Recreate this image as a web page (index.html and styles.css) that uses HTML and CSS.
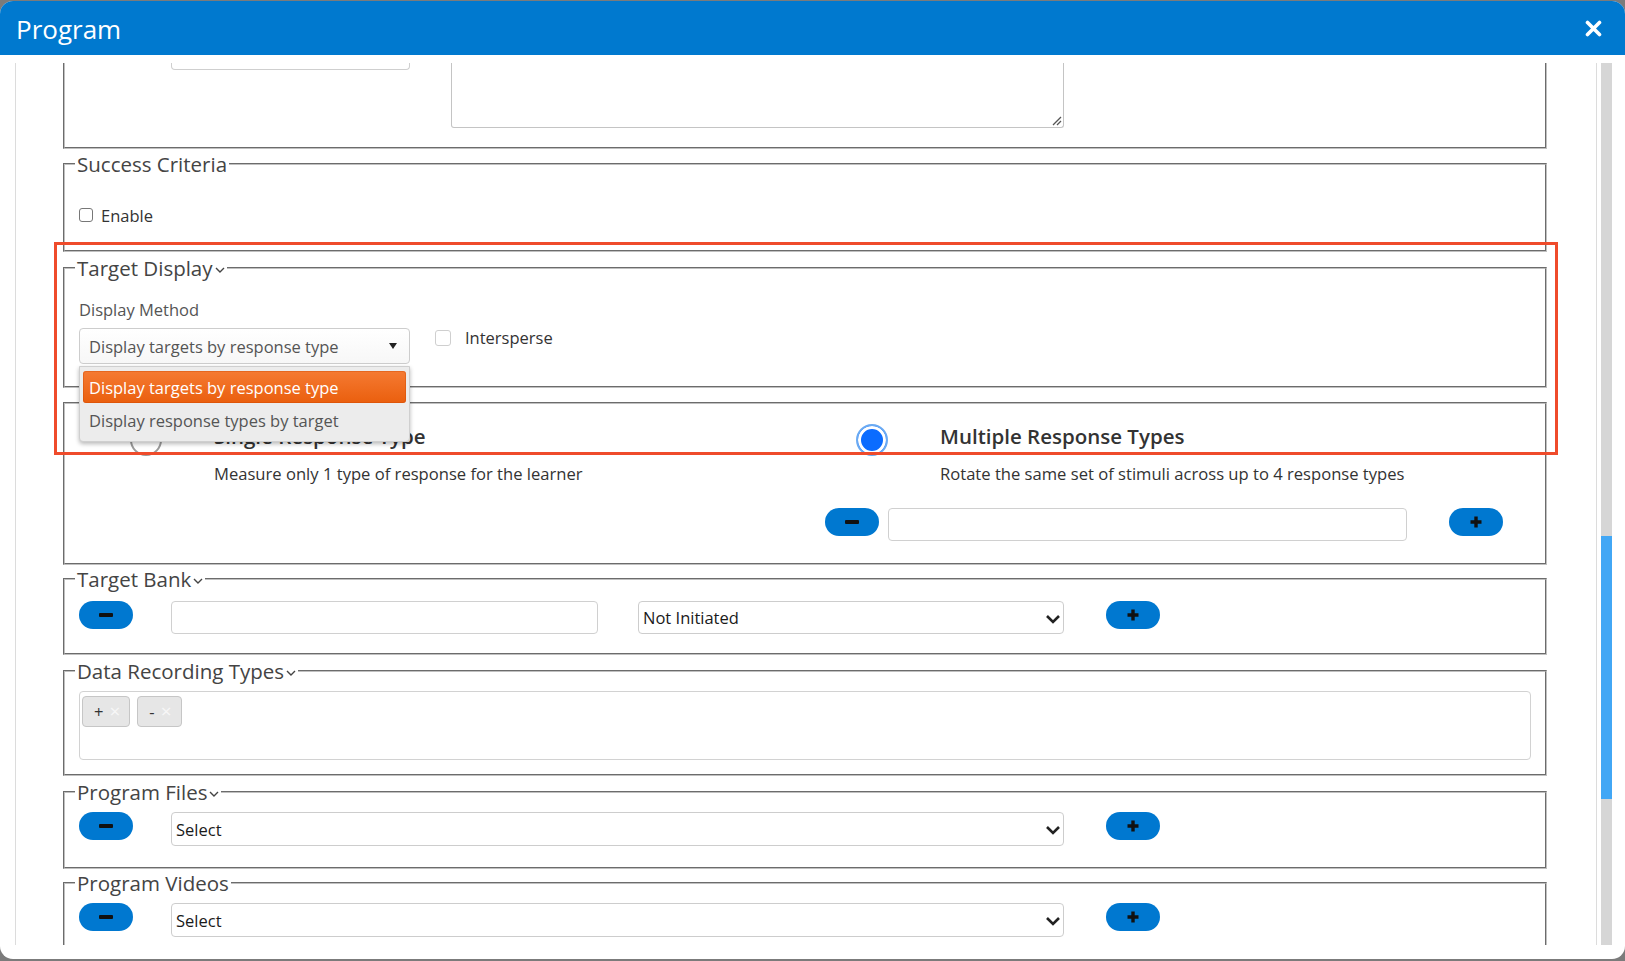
FILE: index.html
```html
<!DOCTYPE html>
<html lang="en">
<head>
<meta charset="utf-8">
<title>Program</title>
<link rel="stylesheet" href="styles.css">
</head>
<body>
<div class="modal">
  <header class="modal-header">
    <h1 class="modal-title">Program</h1>
    <span class="close-btn" aria-label="Close">
      <svg width="17" height="17" viewBox="0 0 17 17"><path d="M2.5 2.5 L14.5 14.5 M14.5 2.5 L2.5 14.5" stroke="#fff" stroke-width="3.6" stroke-linecap="round"/></svg>
    </span>
  </header>
  <div class="modal-body">
    <div class="frame">
      <div class="content">

        <div class="fs fs-clipped">
          <div class="stub-input"></div>
          <div class="stub-textarea">
            <svg class="grip" width="12" height="12" viewBox="0 0 12 12"><path d="M11 3 L3 11 M11 7 L7 11" stroke="#555" stroke-width="1.3"/></svg>
          </div>
        </div>

        <fieldset class="fs fs-success">
          <legend>Success Criteria</legend>
          <label class="check"><span class="cb"></span>Enable</label>
        </fieldset>

        <fieldset class="fs fs-display">
          <legend>Target Display<svg class="chev" width="10" height="6" viewBox="0 0 10 6"><path d="M1 1 L5 5 L9 1" fill="none" stroke="#444" stroke-width="1.4"/></svg></legend>
          <div class="field-label">Display Method</div>
          <div class="display-row">
            <div class="picker">
              <div class="picker-box">Display targets by response type<span class="caret"></span></div>
              <ul class="picker-menu">
                <li class="picker-opt active">Display targets by response type</li>
                <li class="picker-opt">Display response types by target</li>
              </ul>
            </div>
            <label class="check check-light"><span class="cb cb-light"></span>Intersperse</label>
          </div>
        </fieldset>

        <fieldset class="fs fs-response">
          <div class="resp-grid">
            <div class="resp-col">
              <span class="radio-wrap"><span class="radio"></span></span>
              <div class="resp-text">
                <div class="resp-title">Single Response Type</div>
                <div class="resp-desc">Measure only 1 type of response for the learner</div>
              </div>
            </div>
            <div class="resp-col">
              <span class="radio-wrap"><span class="radio radio-on"></span></span>
              <div class="resp-text">
                <div class="resp-title">Multiple Response Types</div>
                <div class="resp-desc">Rotate the same set of stimuli across up to 4 response types</div>
              </div>
              <div class="resp-controls">
                <span class="pill"><svg width="16" height="6" viewBox="0 0 16 6"><rect x="1" y="1" width="14" height="4" rx="1" fill="#111"/></svg></span>
                <div class="input resp-input"></div>
                <span class="pill pill-plus"><svg width="14" height="14" viewBox="0 0 14 14"><path d="M7 1.5 V12.5 M1.5 7 H12.5" stroke="#111" stroke-width="3.4"/></svg></span>
              </div>
            </div>
          </div>
        </fieldset>

        <fieldset class="fs fs-bank">
          <legend>Target Bank<svg class="chev" width="10" height="6" viewBox="0 0 10 6"><path d="M1 1 L5 5 L9 1" fill="none" stroke="#444" stroke-width="1.4"/></svg></legend>
          <div class="ctrl-row">
            <span class="pill"><svg width="16" height="6" viewBox="0 0 16 6"><rect x="1" y="1" width="14" height="4" rx="1" fill="#111"/></svg></span>
            <div class="input bank-input"></div>
            <div class="select bank-select"><span>Not Initiated</span><svg width="16" height="10" viewBox="0 0 16 10"><path d="M2 2 L8 8 L14 2" fill="none" stroke="#222" stroke-width="2.6"/></svg></div>
            <span class="pill"><svg width="14" height="14" viewBox="0 0 14 14"><path d="M7 1.5 V12.5 M1.5 7 H12.5" stroke="#111" stroke-width="3.4"/></svg></span>
          </div>
        </fieldset>

        <fieldset class="fs fs-drt">
          <legend>Data Recording Types<svg class="chev" width="10" height="6" viewBox="0 0 10 6"><path d="M1 1 L5 5 L9 1" fill="none" stroke="#444" stroke-width="1.4"/></svg></legend>
          <div class="multi">
            <span class="chip">+ <span class="chip-x">×</span></span>
            <span class="chip">- <span class="chip-x">×</span></span>
          </div>
        </fieldset>

        <fieldset class="fs fs-files">
          <legend>Program Files<svg class="chev" width="10" height="6" viewBox="0 0 10 6"><path d="M1 1 L5 5 L9 1" fill="none" stroke="#444" stroke-width="1.4"/></svg></legend>
          <div class="ctrl-row ctrl-row-tight">
            <span class="pill"><svg width="16" height="6" viewBox="0 0 16 6"><rect x="1" y="1" width="14" height="4" rx="1" fill="#111"/></svg></span>
            <div class="select wide-select"><span>Select</span><svg width="16" height="10" viewBox="0 0 16 10"><path d="M2 2 L8 8 L14 2" fill="none" stroke="#222" stroke-width="2.6"/></svg></div>
            <span class="pill"><svg width="14" height="14" viewBox="0 0 14 14"><path d="M7 1.5 V12.5 M1.5 7 H12.5" stroke="#111" stroke-width="3.4"/></svg></span>
          </div>
        </fieldset>

        <fieldset class="fs fs-videos">
          <legend>Program Videos</legend>
          <div class="ctrl-row ctrl-row-tight">
            <span class="pill"><svg width="16" height="6" viewBox="0 0 16 6"><rect x="1" y="1" width="14" height="4" rx="1" fill="#111"/></svg></span>
            <div class="select wide-select"><span>Select</span><svg width="16" height="10" viewBox="0 0 16 10"><path d="M2 2 L8 8 L14 2" fill="none" stroke="#222" stroke-width="2.6"/></svg></div>
            <span class="pill"><svg width="14" height="14" viewBox="0 0 14 14"><path d="M7 1.5 V12.5 M1.5 7 H12.5" stroke="#111" stroke-width="3.4"/></svg></span>
          </div>
        </fieldset>

      </div>
      <div class="scrollbar"><div class="thumb"></div></div>
    </div>
  </div>
</div>
<div class="annotation"></div>
</body>
</html>
```
FILE: styles.css
```css
* { box-sizing: border-box; }
html, body { margin: 0; padding: 0; }
body {
  background: #7b7b7b;
  font-family: "Open Sans", "Noto Sans", sans-serif;
  color: #333;
  height: 961px;
  overflow: hidden;
  position: relative;
}
.modal {
  margin-top: 1px;
  height: 958px;
  background: #fff;
  border-radius: 13px;
  overflow: hidden;
  display: flex;
  flex-direction: column;
}
.modal-header {
  height: 54px;
  flex: none;
  background: #0079cf;
  display: flex;
  align-items: center;
  justify-content: space-between;
  padding: 0 23px 0 16px;
}
.modal-title {
  margin: 0;
  font-size: 26px;
  font-weight: 400;
  color: #fff;
  line-height: 1;
  position: relative;
  top: 1px;
}
.close-btn { display: flex; }
.modal-body {
  flex: 1;
  min-height: 0;
  display: flex;
  padding: 8px 13px 14px 15px;
}
.frame { flex: 1; display: flex; gap: 4px; min-height: 0; }
.content {
  flex: 1;
  border-left: 1px solid #dcdcdc;
  border-right: 1px solid #dcdcdc;
  padding: 0 49px 0 47px;
  overflow: hidden;
}
.scrollbar { width: 11px; background: #d6d6d6; }
.thumb { margin-top: 473px; height: 263px; background: #42a7f5; }

/* fieldsets */
.fs {
  border: 2px groove #c0c0c0;
  margin: 0 0 2px;
  padding: 0 14px;
  min-width: 0;
}
.fs legend {
  font-size: 20.5px;
  line-height: 28px;
  color: #444;
  padding: 0 2px;
  margin-left: -4px;
}
.chev { margin-left: 2px; vertical-align: 3px; }

.fs-clipped {
  border-top: none;
  height: 86px;
  margin-bottom: 1px;
  display: flex;
  align-items: flex-start;
  padding-left: 106px;
}
.stub-input {
  width: 239px;
  height: 7px;
  border: 1px solid #cfcfcf;
  border-top: none;
  border-radius: 0 0 4px 4px;
}
.stub-textarea {
  margin-left: 41px;
  width: 613px;
  height: 65px;
  border: 1px solid #c4c4c4;
  border-top: none;
  border-radius: 0 0 3px 3px;
  display: flex;
  justify-content: flex-end;
  align-items: flex-end;
}
.grip { margin: 0 1px 1px 0; }

.check {
  display: flex;
  align-items: center;
  font-size: 16.5px;
  color: #333;
  height: 22px;
}
.cb {
  width: 14px; height: 14px;
  border: 1px solid #777;
  border-radius: 3px;
  background: #fff;
  margin-right: 8px;
}
.fs-success { padding-bottom: 24px; }
.fs-success .check { margin-top: 26px; }

.field-label { font-size: 16.5px; color: #555; line-height: 22px; margin-top: 17px; }
.display-row { display: flex; align-items: flex-start; margin-top: 7px; }
.fs-display { padding-bottom: 22px; }
.picker { position: relative; width: 331px; }
.picker-box {
  height: 36px;
  border: 1px solid #cdcdcd;
  border-radius: 4px;
  background: linear-gradient(#ffffff, #f7f7f7);
  font-size: 16.5px;
  color: #555;
  display: flex;
  align-items: center;
  justify-content: space-between;
  padding: 0 12px 0 9px;
}
.caret {
  width: 0; height: 0;
  border-left: 4px solid transparent;
  border-right: 4px solid transparent;
  border-top: 6px solid #222;
}
.picker-menu {
  position: absolute;
  z-index: 5;
  left: 0;
  top: 38px;
  width: 331px;
  margin: 0;
  padding: 4px 3px 4px;
  list-style: none;
  background: #ececec;
  border: 1px solid #cfcfcf;
  border-radius: 0 0 4px 4px;
  box-shadow: 0 2px 4px rgba(0,0,0,.28);
}
.picker-opt {
  height: 34px;
  display: flex;
  align-items: center;
  padding-left: 6px;
  font-size: 16.5px;
  color: #555;
}
.picker-opt.active {
  height: 32px;
  color: #fff;
  border-radius: 3px;
  background: linear-gradient(#f57a32, #ea5f0e);
  box-shadow: inset 0 0 0 1px rgba(200,70,0,.35);
}
.check-light { margin-left: 25px; height: 19px; }
.cb-light { width: 16px; height: 16px; border-color: #cfcfcf; margin-right: 14px; }

.fs-response { margin-top: 14px; margin-bottom: 0; padding: 19px 14px 22px; }
.resp-grid { display: grid; grid-template-columns: 1fr 1fr; }
.resp-col { display: flex; flex-wrap: wrap; align-items: flex-start; }
.radio-wrap { width: 135px; display: flex; justify-content: center; padding-top: 1px; padding-right: 2px; }
.radio {
  width: 32px; height: 32px;
  border-radius: 50%;
  border: 2px solid #9a9a9a;
  background: #fff;
}
.radio-on {
  border: 2px solid #6aaaf3;
  background: #0b6cff;
  box-shadow: inset 0 0 0 3px #fff;
}
.resp-text { flex: 1; }
.resp-title { font-size: 20.5px; font-weight: 600; line-height: 27px; color: #333; }
.resp-desc { font-size: 16.6px; line-height: 22px; color: #333; margin-top: 13px; }
.resp-controls {
  width: 100%;
  display: flex;
  align-items: flex-start;
  margin-top: 23px;
  padding-left: 20px;
}
.resp-input { width: 519px; margin-left: 9px; margin-right: 42px; height: 33px; }

.pill {
  width: 54px; height: 28px;
  border-radius: 14px;
  background: #0078d0;
  display: flex;
  align-items: center;
  justify-content: center;
  flex: none;
}
.input {
  height: 33px;
  border: 1px solid #d0d0d0;
  border-radius: 4px;
  background: #fff;
}
.ctrl-row {
  display: grid;
  grid-template-columns: 92px 467px 468px 1fr;
  align-items: start;
  margin-top: 8px;
}
.ctrl-row-tight { margin-top: 6px; }
.ctrl-row .pill { justify-self: start; }
.bank-input { width: 427px; }
.select {
  height: 33px;
  border: 1px solid #cdcdcd;
  border-radius: 4px;
  display: flex;
  align-items: center;
  justify-content: space-between;
  padding: 0 2px 0 4px;
  font-size: 16.5px;
  color: #1a1a1a;
}
.select svg { margin-top: 2px; }
.bank-select { width: 426px; }
.wide-select { grid-column: 2 / span 2; width: 893px; height: 34px; }
.fs-bank { padding-bottom: 19px; }

.fs-drt { padding-bottom: 14px; margin-bottom: 2px; }
.multi {
  margin-top: 6px;
  height: 69px;
  border: 1px solid #d2d2d2;
  border-radius: 4px;
  padding: 4px 2px;
  display: flex;
  align-items: flex-start;
  gap: 7px;
}
.chip {
  height: 31px;
  padding: 0 9px 0 11px;
  border: 1px solid #c6c6c6;
  border-radius: 4px;
  background: #e6e6e6;
  font-size: 16.5px;
  color: #333;
  display: flex;
  align-items: center;
  gap: 6px;
}
.chip-x { color: #f7f7f7; font-size: 19px; line-height: 1; }
.fs-files { padding-bottom: 21px; margin-bottom: 0; }
.fs-videos { padding-bottom: 20px; }

.annotation {
  position: absolute;
  left: 54px;
  top: 242px;
  width: 1504px;
  height: 213px;
  border: 3px solid #ef4b2b;
  pointer-events: none;
}
```
